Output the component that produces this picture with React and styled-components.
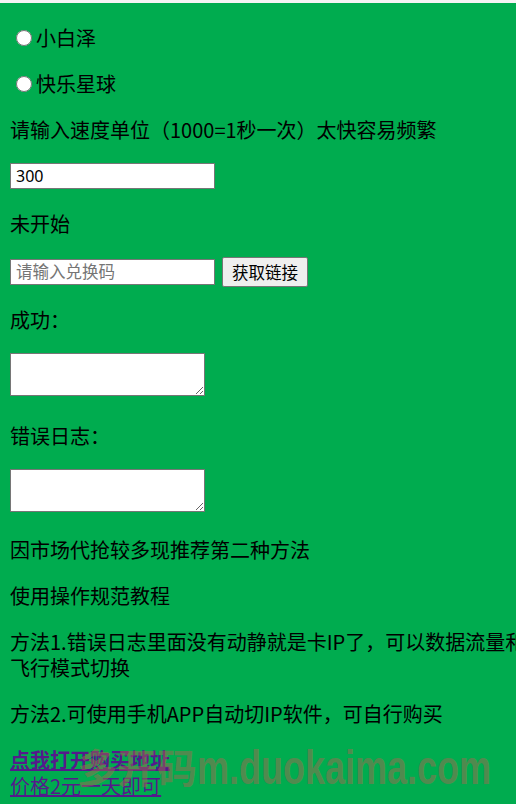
import styled, { createGlobalStyle } from "styled-components";
import { useState } from "react";

const GlobalStyle = createGlobalStyle`
  html, body {
    margin: 0;
    overflow-x: hidden;
    background: #f4f4f4;
  }
  body {
    padding-top: 3px;
    font-family: "Noto Sans CJK SC", "Noto Sans", sans-serif;
  }
`;

// 整个绿色页面
const Page = styled.div`
  position: relative;
  width: 525px;
  min-height: 799px;
  padding: 2px 10px 0;
  overflow: hidden;
  background: #00ac4f;
  color: #000;
  font-size: 20px;
  line-height: 26px;
`;

const Para = styled.p`
  margin: 20px 0;
`;

const RadioLabel = styled.label`
  display: flex;
  align-items: center;
  margin: 20px 0;
  cursor: pointer;
`;

const Radio = styled.input`
  width: 16px;
  height: 16px;
  margin: 0 4px 0 6px;
`;

const Row = styled.div`
  display: flex;
  align-items: ${(props) => props.$align || "center"};
  gap: 7px;
  height: ${(props) => props.$h}px;
  margin: 20px 0;
`;

const TextInput = styled.input`
  box-sizing: border-box;
  width: 205px;
  height: 26px;
  padding: 1px 5px;
  border: 1px solid #767676;
  border-radius: 0;
  background: #fff;
  font-family: "Noto Sans", "Noto Sans CJK SC", sans-serif;
  font-size: 16px;
  color: #000;
  &::placeholder {
    color: #757575;
    font-family: "Noto Sans CJK SC", sans-serif;
    font-size: 16.5px;
  }
`;

const Button = styled.button`
  height: 30px;
  padding: 0 9px;
  border: 1px solid #767676;
  border-radius: 2px;
  background: #efefef;
  font-family: "Noto Sans CJK SC", sans-serif;
  font-size: 16.5px;
  color: #000;
`;

const TextArea = styled.textarea`
  box-sizing: border-box;
  width: 195px;
  height: 43px;
  border: 1px solid #767676;
  border-radius: 0;
  background: #fff;
`;

const Links = styled.div`
  margin: 20px 0 0;
`;

const Link = styled.a`
  color: #551a8b;
  text-decoration: underline;
  font-weight: ${(props) => (props.$bold ? 700 : 400)};
`;

// 截图站的水印，盖在链接上面
const Watermark = styled.div`
  position: absolute;
  left: 77px;
  top: 750px;
  display: flex;
  align-items: baseline;
  color: rgba(160, 104, 80, 0.52);
  font-weight: 700;
  white-space: nowrap;
  pointer-events: none;
`;

const WmCn = styled.span`
  font-family: "Noto Sans CJK SC", sans-serif;
  font-size: 40px;
`;

const WmEn = styled.span`
  display: inline-block;
  font-family: "Liberation Sans", sans-serif;
  font-size: 36px;
  transform: scaleY(1.32);
  transform-origin: 50% 80%;
`;

function App() {
  const [site, setSite] = useState("");
  const [speed, setSpeed] = useState("300");
  const [code, setCode] = useState("");

  return (
    <>
      <GlobalStyle />
      <Page>
        <RadioLabel>
          <Radio
            type="radio"
            name="site"
            checked={site === "xbz"}
            onChange={() => setSite("xbz")}
          />
          小白泽
        </RadioLabel>
        <RadioLabel>
          <Radio
            type="radio"
            name="site"
            checked={site === "klxq"}
            onChange={() => setSite("klxq")}
          />
          快乐星球
        </RadioLabel>
        <Para>请输入速度单位（1000=1秒一次）太快容易频繁</Para>
        <Row $h={28} $align="flex-start">
          <TextInput value={speed} onChange={(e) => setSpeed(e.target.value)} />
        </Row>
        <Para>未开始</Para>
        <Row $h={30}>
          <TextInput
            placeholder="请输入兑换码"
            value={code}
            onChange={(e) => setCode(e.target.value)}
          />
          <Button>获取链接</Button>
        </Row>
        <Para>成功：</Para>
        <Row $h={50} $align="flex-start">
          <TextArea />
        </Row>
        <Para>错误日志：</Para>
        <Row $h={48} $align="flex-start">
          <TextArea />
        </Row>
        <Para>因市场代抢较多现推荐第二种方法</Para>
        <Para>使用操作规范教程</Para>
        <Para>方法1.错误日志里面没有动静就是卡IP了，可以数据流量和飞行模式切换</Para>
        <Para>方法2.可使用手机APP自动切IP软件，可自行购买</Para>
        <Links>
          <Link href="#" $bold>
            点我打开购买地址
          </Link>
          <br />
          <Link href="#">价格2元一天即可</Link>
        </Links>
        <Watermark>
          <WmCn>多开码</WmCn>
          <WmEn>m.duokaima.com</WmEn>
        </Watermark>
      </Page>
    </>
  );
}

export default App;
